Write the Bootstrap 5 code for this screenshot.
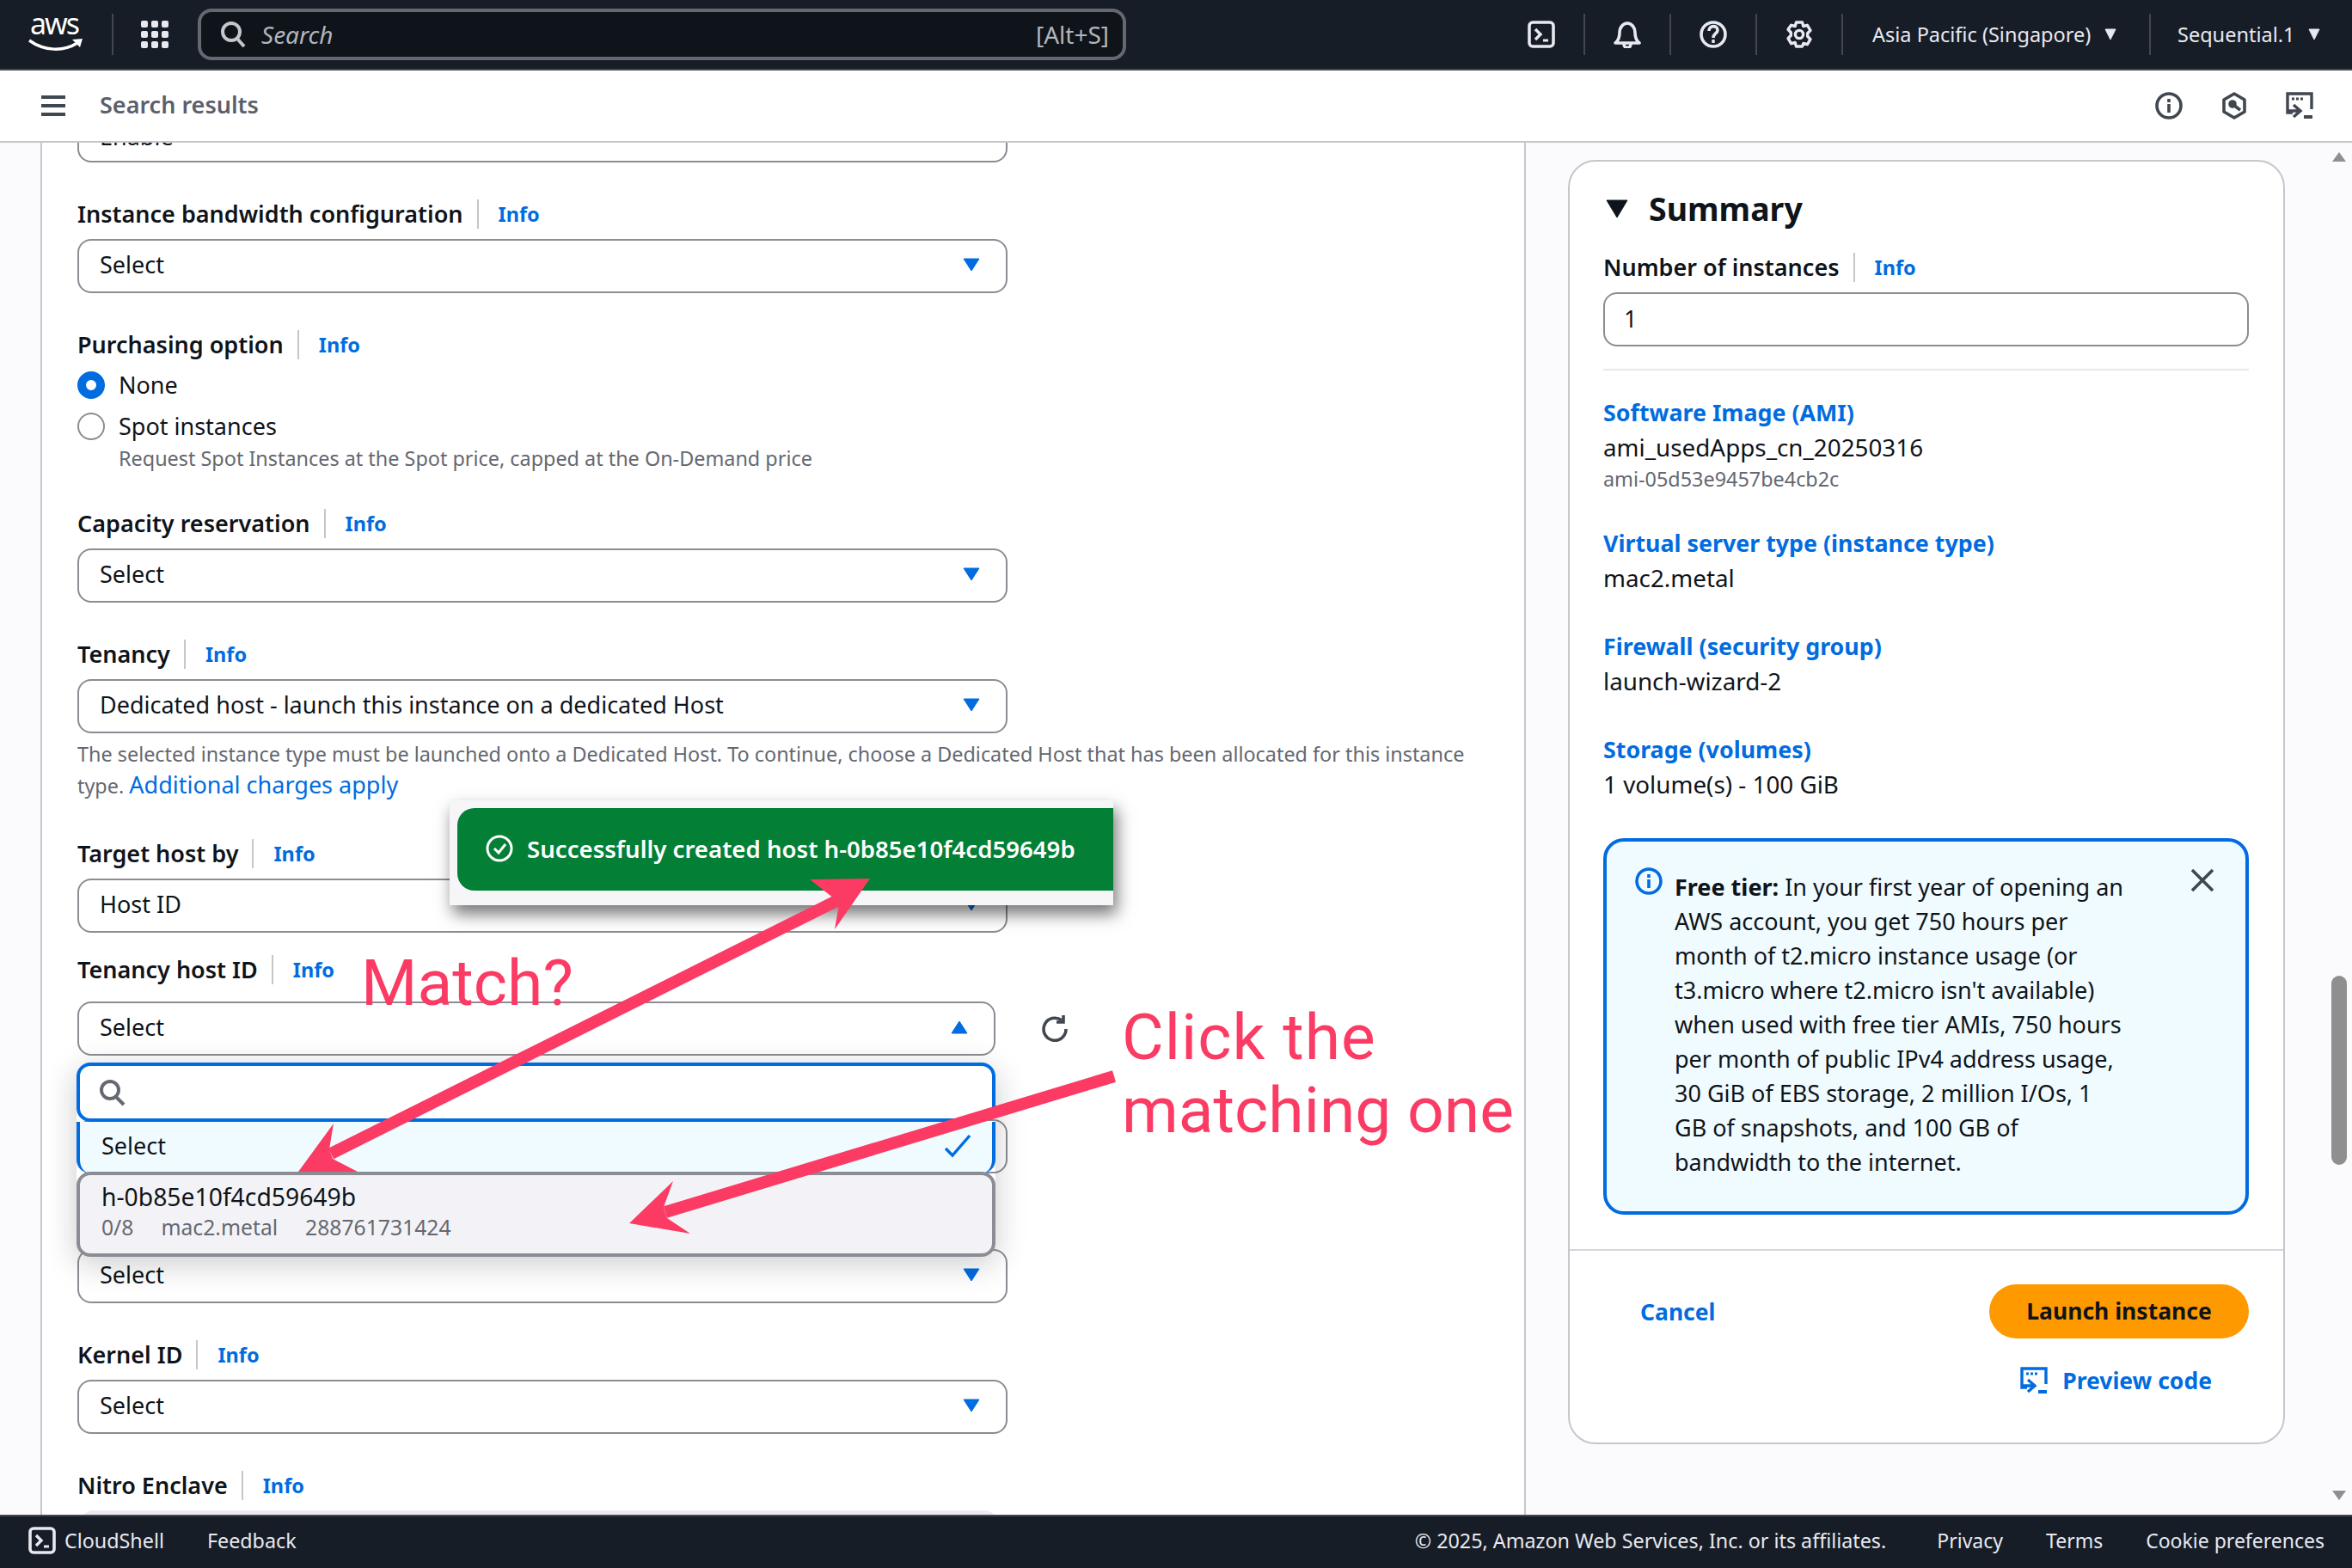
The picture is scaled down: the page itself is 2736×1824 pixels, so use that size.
<!DOCTYPE html>
<html lang="en">
<head>
  <meta charset="UTF-8" />
  <meta name="viewport" content="width=device-width, initial-scale=1.0" />
  <title>Launch an instance - EC2</title>
  <link href="https://cdn.jsdelivr.net/npm/bootstrap@5.3.0/dist/css/bootstrap.min.css" rel="stylesheet" />
  <style>
    html, body { height: 100%; overflow: hidden; }
    body { font-family: "Noto Sans", "Open Sans", sans-serif; font-size: 27px; line-height: 40px; color: #0f141a; }
    a { text-decoration: none; color: #006ce0; }
    .page-wrap { position: relative; height: 1824px; }

    /* top bar */
    .top-bar { height: 82px; background: #161d26; border-bottom: 2px solid #424650; color: #e8e8ef; font-size: 23.500px; }
    .top-sep { width: 2px; height: 48px; background: #424650; }
    .aws-logo { margin-left: 33px; width: 64px; }
    .search-box { width: 1080px; height: 60px; margin-left: 34px; background: #0f141a; border: 4px solid #656871; border-radius: 16px; padding: 0 16px 0 22px; color: #b4b4bb; font-size: 28px; }
    .search-box em { margin-left: 18px; }
    .tb-icon { width: 98px; }
    .region { width: 356px; padding-left: 34px; }
    .acct { width: 234px; padding-left: 31px; }

    /* sub bar */
    .sub-bar { height: 84px; border-bottom: 2px solid #c6c6cd; padding-left: 48px; padding-right: 45px; }
    .sub-title { margin-left: 40px; font-weight: 600; color: #5b5f6b; font-size: 27px; padding-bottom: 2px; }
    .sub-icons { gap: 44px; }

    /* body split */
    .work-area { height: 1596px; overflow: hidden; }
    .gutter { width: 49px; background: #fbfbfd; border-right: 2px solid #c6c6cd; flex: none; }
    .form-col { width: 1726px; flex: none; padding-left: 41px; border-right: 2px solid #c6c6cd; overflow: hidden; }
    .side-col { flex: 1; background: #fbfbfd; padding: 20px 0 0 49px; position: relative; }

    /* form fields */
    .fake-select { height: 63px; width: 1082px; border: 2px solid #8c8c94; border-radius: 16px; background: #fff; padding: 0 30px 3px 24px; }
    .clip-select { margin-top: -40px; padding: 3px 24px 0; }
    .fld { margin-top: 43px; }
    .first-fld { margin-top: 43px; }
    .fld-label { height: 34px; margin-bottom: 12px; font-weight: 600; }
    .fld-label a { font-size: 23.500px; font-weight: 700; padding-left: 23px; margin-left: 16px; border-left: 2px solid #c6c6cd; line-height: 34px; }
    .host-fld { margin-top: 26px; }
    .host-fld .fld-label { margin-bottom: 20px; }
    .host-fld .fake-select { width: 1068px; }
    .host-row { gap: 52px; }
    .under-a { margin-top: 74px; }
    .under-b { margin-top: 88px; }
    .help-text { font-size: 23.400px; line-height: 35px; color: #656871; margin-top: 7px; width: 1640px; }
    .help-text a { font-size: 27px; }
    .after-help { margin-top: 44px; }
    .radio-row { height: 40px; gap: 16px; }
    .radio-on { width: 32px; height: 32px; border-radius: 50%; border: 10px solid #006ce0; background: #fff; }
    .radio-off { width: 32px; height: 32px; border-radius: 50%; border: 2px solid #8c8c94; background: #fff; }
    .radio-desc { font-size: 23.400px; line-height: 35px; color: #656871; padding-left: 48px; }
    .radios { margin-top: -2px; }
    .spot-row { margin-top: 8px; }
    .after-radio { margin-top: 41px; }
    .disabled-box { height: 63px; width: 1068px; margin-left: 3px; background: #ebebf0; border-radius: 16px; }

    /* summary card */
    .sum-card { width: 834px; height: 1494px; background: #fff; border: 2px solid #c6c6cd; border-radius: 32px; padding-top: 29px; }
    .sum-inner { padding: 0 40px 0 39px; }
    .sum-head { font-size: 37.500px; font-weight: 700; line-height: 52px; gap: 24px; margin-left: 3px; }
    .sum-num { margin-top: 25px; }
    .sum-input { height: 63px; border: 2px solid #8c8c94; border-radius: 16px; padding: 0 22px 1px; }
    .sum-rule { height: 2px; background: #e8e8ed; margin-top: 26px; }
    .sum-title { font-weight: 700; display: block; font-size: 26.800px; }
    .sum-val { font-size: 27.800px; }
    .sum-first { margin-top: 29px; }
    .sum-item { margin-top: 40px; }
    .sum-item2 { margin-top: 37px; }
    .sum-small { font-size: 23.400px; line-height: 35px; color: #656871; }
    .tier-box { height: 438px; margin-top: 43px; background: #f0fbff; border: 4px solid #006ce0; border-radius: 24px; padding: 33px 0 0 79px; position: relative; }
    .tier-text { width: 524px; }
    .tier-info { position: absolute; left: 33px; top: 30px; }
    .tier-close { position: absolute; right: 36px; top: 31px; }
    .sum-divider { height: 2px; background: #d5d5db; margin-top: 40px; }
    .sum-foot { padding: 39px 40px 0 82px; }
    .launch-btn { width: 302px; height: 63px; background: #f90; color: #0f141a; border-radius: 32px; font-weight: 700; font-size: 26.500px; padding: 0; border: 0; }
    .foot-link { font-weight: 700; font-size: 26.500px; }
    .preview-link { margin-top: 29px; padding-right: 43px; gap: 16px; }

    .scroll-up { position: absolute; left: 2712px; top: 176px; }
    .scroll-down { position: absolute; left: 2712px; top: 1732px; }
    .scroll-thumb { position: absolute; left: 2712px; top: 1135px; width: 18px; height: 220px; background: #8f8f8f; border-radius: 9px; }

    /* bottom bar */
    .bottom-bar { height: 62px; background: #161d26; border-top: 2px solid #424650; color: #e8e8ef; font-size: 23.300px; padding: 0 32px 4px 33px; }
    .bottom-left { gap: 50px; }
    .bottom-right { gap: 50px; }
    .bottom-links { font-size: 23px; }
    .copy-txt { margin-right: 9px; }
    .cs-link { gap: 10px; }

    /* overlays */
    .host-menu { position: absolute; left: 89px; top: 1236px; width: 1069px; height: 226px; box-shadow: 0 8px 36px rgba(15, 20, 26, .22); border-radius: 16px; }
    .menu-search { height: 69px; background: #fff; border: 4px solid #006ce0; border-radius: 16px; padding-left: 22px; }
    .menu-sel { height: 60px; background: #f0fbff; border: 4px solid #006ce0; border-top: 0; border-bottom: 0; border-radius: 0 0 16px 16px; padding: 0 24px 4px 25px; }
    .menu-item { height: 99px; margin-top: -2px; position: relative; background: #f3f3f7; border: 4px solid #8c8c94; border-radius: 16px; padding: 5px 0 0 25px; font-size: 28.300px; }
    .menu-sub { font-size: 24.700px; line-height: 36px; color: #656871; gap: 32px; margin-top: -2px; }
    .toast-wrap { position: absolute; left: 523px; top: 931px; width: 772px; height: 122px; background: #f6f6f9; padding: 9px 0 0 9px; box-shadow: 4px 10px 18px rgba(0, 0, 0, .55); }
    .toast-green { height: 96px; background: #037f36; border-radius: 20px 0 0 20px; color: #fff; font-weight: 600; font-size: 27.600px; padding: 0 0 3px 33px; gap: 16px; }
    .note-txt { position: absolute; font-family: Roboto, "Liberation Sans", sans-serif; font-size: 75px; line-height: 85px; color: #fb3b63; white-space: nowrap; }
    .note-match { left: 420px; top: 1101px; }
    .note-click { left: 1305px; top: 1164px; }
    .note-wide { letter-spacing: 1px; }
    .arrows { position: absolute; left: 0; top: 0; pointer-events: none; }
  </style>
</head>
<body>
<svg width="0" height="0" class="position-absolute">
  <symbol id="caret-blue" viewBox="0 0 20 16"><path d="M1 1h18L10 15z" fill="#006ce0" stroke="#006ce0" stroke-linejoin="round"/></symbol>
  <symbol id="caret-light" viewBox="0 0 14 16"><path d="M1 2h12L7 14z" fill="#e8e8ef" stroke="#e8e8ef" stroke-linejoin="round"/></symbol>
  <symbol id="shell" viewBox="0 0 32 32"><rect x="2" y="2" width="28" height="28" rx="4" fill="none" stroke="#e8e8ef" stroke-width="3.6"/><path d="M9 10l6 6-6 6" fill="none" stroke="#e8e8ef" stroke-width="3.4"/><path d="M18 23h6" stroke="#e8e8ef" stroke-width="3"/></symbol>
</svg>

<div class="page-wrap d-flex flex-column">
  <!-- top nav -->
  <div class="top-bar d-flex align-items-center flex-shrink-0">
    <svg class="aws-logo" height="80" viewBox="0 0 64 80">
      <text x="2" y="40" font-family="Noto Sans" font-size="34" fill="#fff" textLength="58">aws</text>
      <path d="M1 47c18 13 40 13 56 3" fill="none" stroke="#fff" stroke-width="3.5"/>
      <path d="M51 46l12-1-3 10z" fill="#fff"/>
    </svg>
    <div class="top-sep" style="margin-left:33px"></div>
    <svg style="margin-left:32px" width="32" height="32" viewBox="0 0 32 32" fill="#e8e8ef">
      <rect width="8" height="8" rx="2"/><rect x="12" width="8" height="8" rx="2"/><rect x="24" width="8" height="8" rx="2"/>
      <rect y="12" width="8" height="8" rx="2"/><rect x="12" y="12" width="8" height="8" rx="2"/><rect x="24" y="12" width="8" height="8" rx="2"/>
      <rect y="24" width="8" height="8" rx="2"/><rect x="12" y="24" width="8" height="8" rx="2"/><rect x="24" y="24" width="8" height="8" rx="2"/>
    </svg>
    <div class="search-box d-flex align-items-center">
      <svg width="30" height="32" viewBox="0 0 30 32" fill="none" stroke="#c6c6cd" stroke-width="4"><circle cx="13" cy="13" r="10"/><path d="M20 21l8 9"/></svg>
      <em>Search</em>
      <span class="ms-auto">[Alt+S]</span>
    </div>
    <div class="d-flex align-items-center ms-auto">
      <div class="tb-icon d-flex justify-content-center"><svg width="32" height="32"><use href="#shell"/></svg></div>
      <div class="top-sep"></div>
      <div class="tb-icon d-flex justify-content-center">
        <svg width="32" height="32" viewBox="0 0 32 32" fill="none" stroke="#e8e8ef" stroke-width="3.6"><path d="M2 26c4-3 5-6 5-12 0-6 4-11 9-11s9 5 9 11c0 6 1 9 5 12z" stroke-linejoin="round"/><path d="M12 27c0 6 8 6 8 0"/></svg>
      </div>
      <div class="top-sep"></div>
      <div class="tb-icon d-flex justify-content-center">
        <svg width="32" height="32" viewBox="0 0 32 32" fill="none" stroke="#e8e8ef" stroke-width="3.6"><circle cx="16" cy="16" r="14"/><path d="M11 12c0-7 10-7 10-1 0 4-5 4-5 9"/><path d="M16 22v4" stroke-width="3.4"/></svg>
      </div>
      <div class="top-sep"></div>
      <div class="tb-icon d-flex justify-content-center">
        <svg width="32" height="32" viewBox="0 0 32 32" fill="none" stroke="#e8e8ef"><path d="M12.5 2h7l1.3 4.5 4.6-1.2 3.6 6-3.3 3.4v3.600l3.300 3.400-3.600 6-4.600-1.200L19.500 30h-7l-1.300-4.500-4.600 1.200-3.600-6L6.300 17.300v-3.600L3 10.300l3.600-5 4.600 1.200z" stroke-width="3.4" stroke-linejoin="round"/><circle cx="16" cy="16" r="4.600" stroke-width="3.4"/></svg>
      </div>
      <div class="top-sep"></div>
      <div class="region d-flex align-items-center gap-2">Asia Pacific (Singapore) <svg width="14" height="16" class="ms-2"><use href="#caret-light"/></svg></div>
      <div class="top-sep"></div>
      <div class="acct d-flex align-items-center gap-2">Sequential.1 <svg width="14" height="16" class="ms-2"><use href="#caret-light"/></svg></div>
    </div>
  </div>

  <!-- breadcrumb row -->
  <div class="sub-bar d-flex align-items-center flex-shrink-0">
    <svg width="28" height="24" viewBox="0 0 28 24" fill="#414750"><rect width="28" height="4"/><rect y="10" width="28" height="4"/><rect y="20" width="28" height="4"/></svg>
    <span class="sub-title">Search results</span>
    <div class="sub-icons d-flex align-items-center ms-auto">
      <svg width="32" height="32" viewBox="0 0 32 32" fill="none" stroke="#414750" stroke-width="3.6"><circle cx="16" cy="16" r="14"/><path d="M16 14v10M16 8v4"/></svg>
      <svg width="32" height="32" viewBox="0 0 32 32" fill="none" stroke="#414750" stroke-width="3.6"><path d="M16 2l12 7v14l-12 7-12-7V9z" stroke-linejoin="round"/><circle cx="14" cy="14" r="3" fill="#414750"/><path d="M15 15l8 6"/></svg>
      <svg width="32" height="32" viewBox="0 0 32 32" fill="none" stroke="#414750" stroke-width="3.4"><path d="M8 24H2V2h28v18"/><path d="M7 8h3M12 8h3M17 8h3" stroke-width="3"/><path d="M9 15l8 7-8 7M3 22h13"/><path d="M21 29h10" stroke-width="4"/></svg>
    </div>
  </div>

  <!-- content -->
  <div class="work-area d-flex flex-shrink-0">
    <div class="gutter"></div>
    <div class="form-col">
      <div class="fake-select clip-select d-flex align-items-center">Enable</div>

      <div class="first-fld">
        <div class="fld-label d-flex align-items-center">Instance bandwidth configuration<a href="#">Info</a></div>
        <div class="fake-select d-flex align-items-center justify-content-between">Select <svg width="20" height="16"><use href="#caret-blue"/></svg></div>
      </div>

      <div class="fld">
        <div class="fld-label d-flex align-items-center">Purchasing option<a href="#">Info</a></div>
        <div class="radios">
          <div class="radio-row d-flex align-items-center"><span class="radio-on"></span>None</div>
          <div class="radio-row spot-row d-flex align-items-center"><span class="radio-off"></span>Spot instances</div>
          <div class="radio-desc">Request Spot Instances at the Spot price, capped at the On-Demand price</div>
        </div>
      </div>

      <div class="after-radio">
        <div class="fld-label d-flex align-items-center">Capacity reservation<a href="#">Info</a></div>
        <div class="fake-select d-flex align-items-center justify-content-between">Select <svg width="20" height="16"><use href="#caret-blue"/></svg></div>
      </div>

      <div class="fld">
        <div class="fld-label d-flex align-items-center">Tenancy<a href="#">Info</a></div>
        <div class="fake-select d-flex align-items-center justify-content-between">Dedicated host - launch this instance on a dedicated Host <svg width="20" height="16"><use href="#caret-blue"/></svg></div>
        <div class="help-text">The selected instance type must be launched onto a Dedicated Host. To continue, choose a Dedicated Host that has been allocated for this instance type. <a href="#">Additional charges apply</a></div>
      </div>

      <div class="after-help">
        <div class="fld-label d-flex align-items-center">Target host by<a href="#">Info</a></div>
        <div class="fake-select d-flex align-items-center justify-content-between">Host ID <svg width="20" height="16"><use href="#caret-blue"/></svg></div>
      </div>

      <div class="host-fld">
        <div class="fld-label d-flex align-items-center">Tenancy host ID<a href="#">Info</a></div>
        <div class="host-row d-flex align-items-center">
          <div class="fake-select d-flex align-items-center justify-content-between">Select
            <svg width="20" height="16" style="transform:rotate(180deg)"><use href="#caret-blue"/></svg>
          </div>
          <svg width="36" height="36" viewBox="0 0 36 36" fill="none" stroke="#414750" stroke-width="3.6"><path d="M30 18a13 13 0 1 1-5-10"/><path d="M27 2v8h-8"/></svg>
        </div>
      </div>

      <div class="fake-select under-a"></div>

      <div class="fake-select under-b d-flex align-items-center justify-content-between">Select <svg width="20" height="16"><use href="#caret-blue"/></svg></div>

      <div class="fld">
        <div class="fld-label d-flex align-items-center">Kernel ID<a href="#">Info</a></div>
        <div class="fake-select d-flex align-items-center justify-content-between">Select <svg width="20" height="16"><use href="#caret-blue"/></svg></div>
      </div>

      <div class="fld">
        <div class="fld-label d-flex align-items-center">Nitro Enclave<a href="#">Info</a></div>
        <div class="disabled-box"></div>
      </div>
    </div>

    <div class="side-col">
      <div class="sum-card">
        <div class="sum-inner">
          <div class="sum-head d-flex align-items-center">
            <svg width="26" height="22" viewBox="0 0 26 22"><path d="M1 1h24L13 21z" fill="#0f141a" stroke="#0f141a" stroke-linejoin="round"/></svg>
            Summary
          </div>
          <div class="sum-num">
            <div class="fld-label d-flex align-items-center">Number of instances<a href="#">Info</a></div>
            <div class="sum-input d-flex align-items-center">1</div>
          </div>
          <div class="sum-rule"></div>
          <div class="sum-first">
            <a class="sum-title" href="#">Software Image (AMI)</a>
            <div class="sum-val">ami_usedApps_cn_20250316</div>
            <div class="sum-small">ami-05d53e9457be4cb2c</div>
          </div>
          <div class="sum-item2">
            <a class="sum-title" href="#">Virtual server type (instance type)</a>
            <div class="sum-val">mac2.metal</div>
          </div>
          <div class="sum-item">
            <a class="sum-title" href="#">Firewall (security group)</a>
            <div class="sum-val">launch-wizard-2</div>
          </div>
          <div class="sum-item">
            <a class="sum-title" href="#">Storage (volumes)</a>
            <div class="sum-val">1 volume(s) - 100 GiB</div>
          </div>
          <div class="tier-box">
            <svg class="tier-info" width="32" height="32" viewBox="0 0 32 32" fill="none" stroke="#006ce0" stroke-width="3.6"><circle cx="16" cy="16" r="14"/><path d="M16 14v10M16 8v4"/></svg>
            <svg class="tier-close" width="28" height="28" viewBox="0 0 28 28" stroke="#414750" stroke-width="3.6"><path d="M2 2l24 24M26 2L2 26"/></svg>
            <div class="tier-text"><b>Free tier:</b> In your first year of opening an AWS account, you get 750 hours per month of t2.micro instance usage (or t3.micro where t2.micro isn't available) when used with free tier AMIs, 750 hours per month of public IPv4 address usage, 30 GiB of EBS storage, 2 million I/Os, 1 GB of snapshots, and 100 GB of bandwidth to the internet.</div>
          </div>
        </div>
        <div class="sum-divider"></div>
        <div class="sum-foot">
          <div class="d-flex align-items-center justify-content-between">
            <a class="foot-link" href="#">Cancel</a>
            <button class="btn launch-btn" type="button">Launch instance</button>
          </div>
          <div class="preview-link d-flex align-items-center justify-content-end">
            <svg width="34" height="32" viewBox="0 0 32 32" fill="none" stroke="#006ce0" stroke-width="3.4"><path d="M8 24H2V2h28v18"/><path d="M7 8h3M12 8h3M17 8h3" stroke-width="3"/><path d="M9 15l8 7-8 7M3 22h13"/><path d="M21 29h10" stroke-width="4"/></svg>
            <a class="foot-link" href="#">Preview code</a>
          </div>
        </div>
      </div>
    </div>
  </div>

  <!-- footer -->
  <div class="bottom-bar d-flex align-items-center justify-content-between flex-shrink-0">
    <div class="bottom-left d-flex align-items-center">
      <span class="cs-link d-flex align-items-center"><svg width="32" height="32"><use href="#shell"/></svg>CloudShell</span>
      <span>Feedback</span>
    </div>
    <div class="bottom-right d-flex align-items-center">
      <span class="copy-txt">© 2025, Amazon Web Services, Inc. or its affiliates.</span>
      <span class="bottom-links">Privacy</span>
      <span class="bottom-links">Terms</span>
      <span class="bottom-links">Cookie preferences</span>
    </div>
  </div>

  <!-- scrollbar of the right pane -->
  <svg class="scroll-up" width="18" height="14"><path d="M9 1l8 11H1z" fill="#8f8f8f"/></svg>
  <div class="scroll-thumb"></div>
  <svg class="scroll-down" width="18" height="14"><path d="M1 2h16L9 13z" fill="#8f8f8f"/></svg>

  <!-- open dropdown -->
  <div class="host-menu">
    <div class="menu-search d-flex align-items-center">
      <svg width="32" height="32" viewBox="0 0 32 32" fill="none" stroke="#656871" stroke-width="4"><circle cx="13" cy="13" r="10"/><path d="M20 21l9 9"/></svg>
    </div>
    <div class="menu-sel d-flex align-items-center justify-content-between">Select
      <svg width="32" height="28" viewBox="0 0 32 28" fill="none" stroke="#006ce0" stroke-width="3.4"><path d="M2 17l8 8L30 2"/></svg>
    </div>
    <div class="menu-item">
      <div>h-0b85e10f4cd59649b</div>
      <div class="menu-sub d-flex"><span>0/8</span><span>mac2.metal</span><span>288761731424</span></div>
    </div>
  </div>

  <!-- flash message -->
  <div class="toast-wrap">
    <div class="toast-green d-flex align-items-center">
      <svg width="32" height="32" viewBox="0 0 32 32" fill="none" stroke="#fff" stroke-width="3"><circle cx="16" cy="16" r="14"/><path d="M10 16l5 5 8-10"/></svg>
      Successfully created host h-0b85e10f4cd59649b
    </div>
  </div>

  <!-- annotations -->
  <div class="note-txt note-match">Match?</div>
  <div class="note-txt note-click"><span class="note-wide">Click the</span><br>matching one</div>
  <svg class="arrows" width="2736" height="1824">
    <g fill="#fb3b63" stroke="none">
      <path d="M385 1342L975 1047" stroke="#fb3b63" stroke-width="14"/>
      <path d="M347 1363L388 1307L383 1337L387 1348L416 1363z"/>
      <path d="M1012 1022L942 1023L970 1045L976 1052L971 1081z"/>
      <path d="M1296 1252L774 1410" stroke="#fb3b63" stroke-width="14"/>
      <path d="M732 1423L783 1374L772 1404L776 1417L803 1435z"/>
    </g>
  </svg>
</div>

<script src="https://cdn.jsdelivr.net/npm/bootstrap@5.3.0/dist/js/bootstrap.bundle.min.js"></script>
</body>
</html>
